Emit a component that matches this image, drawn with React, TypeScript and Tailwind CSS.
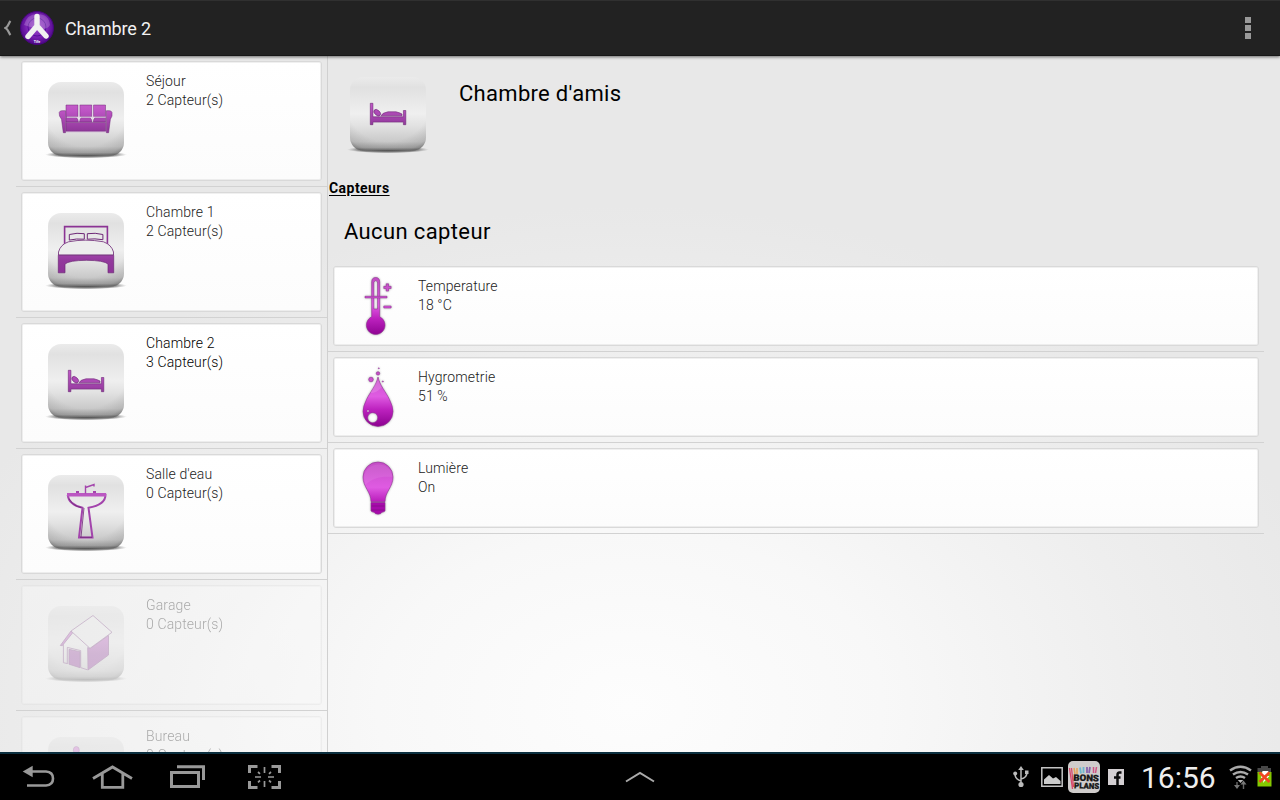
import type { ReactNode } from "react";

type GlyphName = "sofa" | "doubleBed" | "bed" | "sink" | "house" | "desk";

const DARK = "#6d2876";

function Glyph({ name }: { name: GlyphName }) {
  switch (name) {
    case "sofa":
      return (
        <g fill="url(#violet)" stroke={DARK} strokeWidth=".5">
          <path d="M66 105h12v11.7H66zM79.8 105h12v11.7h-12zM93.5 105h12v11.7h-12z" />
          <path d="M66 117.600h10.500l1.800 2.700v1.700H66zM79.600 120.300l1.600-2.700h9l1.600 2.700v1.700H79.600zM93.300 120.300l1.600-2.700h10.700v4.400H93.300z" />
          <path d="M66 122.400h39.700v8.900H66z" />
          <path d="M59.200 112.500q.6-2 3-1.800h3.300v22h-2.200l-1.800-13.500q-2.800-3-2.300-6.700zM112 112.500q-.6-2-3-1.800h-2.600v22h2.200l1.800-13.500q2.400-3 1.600-6.700z" />
          <path d="M66 131.800h40" stroke="#c58ccb" />
          <path d="M79 105v16M92.600 105v16M67 117.200h38.500" stroke="#e4d4e6" strokeWidth=".9" />
        </g>
      );
    case "doubleBed":
      return (
        <g fill="none" stroke={DARK} strokeWidth=".7">
          <path d="M64.600 113V95.600h42.800V113" stroke="#8b3494" strokeWidth="1.600" />
          <path d="M69.300 103.500q8-2 15-.8v5.500q-8-.8-15 .9zM87.300 102.700q8-1.200 15.600.8v5.200q-8-1.400-15.600-.5z" strokeWidth="1" />
          <path d="M58.500 124v-3q2-7.500 10-10.200 17-3.300 35 0 8 3 10 10.200v3z" fill="#ededed" strokeWidth=".8" />
          <path d="M58.300 124.300h55.400v17.500h-5.700v-8.800q-4-3.500-21.500-3.700-17.500.2-21.500 3.700v8.800h-6.700z" fill="url(#violet)" />
        </g>
      );
    case "bed":
      return (
        <g fill="url(#violet)" stroke={DARK} strokeWidth=".6">
          <path d="M68.300 108.300h2.600v13.500h30.500v-6.300h2.400v14.200h-2.400v-2.600H70.900v2.600h-2.600z" />
          <ellipse cx="75.200" cy="117.700" rx="3.900" ry="2.500" transform="rotate(42 75.200 117.700)" />
          <path d="M79 120.800q1-3 7-4h8q4 1 6 2.200v1.800z" />
        </g>
      );
    case "sink":
      return (
        <g fill="none" stroke="#a344ac" strokeWidth="2">
          <path d="M67.500 101.800h38q0 10-17 13l4 29.700h-13.500l3.500-29.700q-14-3.500-14.800-13z" />
          <path d="M67 101.800h39" stroke="#bb58c2" strokeWidth="3.600" />
          <path d="M77.500 100v-2M94.500 100v-2" strokeWidth="3" />
          <path d="M85.500 100.500v-8M85.500 94.500l8.500-3v2" strokeWidth="1.400" />
          <path d="M81 144l3-29M69 105.500q3 7 12.500 9.200M80 144.300h12" stroke={DARK} strokeWidth=".8" />
        </g>
      );
    case "house":
      return (
        <g fill="none" stroke={DARK} strokeWidth=".8">
          <path d="M87.700 123.500l2.300 1 18.500-13v19.500l-20.500 15z" fill="url(#violet)" />
          <path d="M71 107l22-15.500 19 16.800-22 16z" fill="#eeeeee" />
          <path d="M71 107l-10.700 14.500 2 .2L72.500 109z" fill="url(#violet)" />
          <path d="M63.400 120.500v18.200l3.800.8M67.300 140v-16.600l13.400 3.200v17l7 2.300" />
          <path d="M69 125.300l11 2.400v16l-11-3.500z" fill="url(#violet)" />
        </g>
      );
    default:
      return (
        <g fill="url(#violet)" stroke={DARK} strokeWidth=".5">
          <ellipse cx="76.300" cy="95.200" rx="3" ry="3.700" />
          <path d="M73 99h7l3 13h18v3H78z" />
        </g>
      );
  }
}

function Tile({ name }: { name: GlyphName }) {
  return (
    <svg className="h-[84px] w-[84px] shrink-0" viewBox="44 78 84 84">
      <ellipse cx="86" cy="154.600" rx="41" ry="3.600" fill="url(#ground)" />
      <rect x="48" y="82" width="76" height="73.500" rx="13" fill="url(#tile)" />
      <rect x="48" y="82" width="76" height="73.500" rx="13" fill="url(#tileShade)" />
      <Glyph name={name} />
    </svg>
  );
}

function Defs() {
  return (
    <svg className="absolute h-0 w-0" aria-hidden="true">
      <defs>
        <linearGradient id="tile" x1="0" y1="0" x2="0" y2="1">
          <stop offset="0" stopColor="#ebebeb" />
          <stop offset=".14" stopColor="#e1e1e1" />
          <stop offset=".5" stopColor="#efefef" />
          <stop offset=".66" stopColor="#e2e2e2" />
          <stop offset=".88" stopColor="#c9c9c9" />
          <stop offset=".96" stopColor="#a6a6a6" />
          <stop offset="1" stopColor="#666666" />
        </linearGradient>
        <radialGradient id="tileShade" cx=".5" cy=".3" r=".82">
          <stop offset=".7" stopColor="#555" stopOpacity="0" />
          <stop offset=".9" stopColor="#555" stopOpacity=".16" />
          <stop offset="1" stopColor="#333" stopOpacity=".45" />
        </radialGradient>
        <radialGradient id="ground">
          <stop offset="0" stopColor="#222" />
          <stop offset=".75" stopColor="#555" stopOpacity=".6" />
          <stop offset="1" stopColor="#888" stopOpacity="0" />
        </radialGradient>
        <linearGradient id="violet" gradientUnits="userSpaceOnUse" x1="0" y1="92" x2="0" y2="146">
          <stop offset="0" stopColor="#cf68d2" />
          <stop offset=".35" stopColor="#bd54c4" />
          <stop offset=".7" stopColor="#92399c" />
          <stop offset="1" stopColor="#8c3097" />
        </linearGradient>
        <linearGradient id="magenta" gradientUnits="userSpaceOnUse" x1="0" y1="277" x2="0" y2="336">
          <stop offset="0" stopColor="#c04cc2" />
          <stop offset=".48" stopColor="#df5be2" />
          <stop offset=".7" stopColor="#bd22bf" />
          <stop offset="1" stopColor="#8b008f" />
        </linearGradient>
      </defs>
    </svg>
  );
}

function Card({ children, className = "" }: { children: ReactNode; className?: string }) {
  return (
    <div
      className={`flex rounded-[3px] border border-[#d9d9d9] bg-linear-to-b from-white to-[#fcfcfc] shadow-[inset_0_0_0_1px_rgba(0,0,0,0.06)] ${className}`}
    >
      {children}
    </div>
  );
}

const rooms: { name: string; count: number; icon: GlyphName; tone: string; text: string }[] = [
  { name: "Séjour", count: 2, icon: "sofa", tone: "", text: "text-[#222]" },
  { name: "Chambre 1", count: 2, icon: "doubleBed", tone: "", text: "text-[#222]" },
  { name: "Chambre 2", count: 3, icon: "bed", tone: "", text: "text-black" },
  { name: "Salle d'eau", count: 0, icon: "sink", tone: "", text: "text-[#222]" },
  { name: "Garage", count: 0, icon: "house", tone: "opacity-30", text: "text-black" },
  { name: "Bureau", count: 0, icon: "desk", tone: "opacity-30", text: "text-black" },
];

function Thermometer() {
  return (
    <g>
      <path
        d="M371.700 282q0-4.500 4-4.500t4 4.500v34.800a9.300 9.300 0 1 1-8 0zM373.800 282v27h3.800v-27q-1.900-3-3.800 0z"
        fillRule="evenodd"
      />
      <path d="M365 296.300h22v1.600h-22zM383.800 286.300h2.400v-2.500h2.400v2.500h2.500v2.300h-2.500v2.500h-2.400v-2.500h-2.400zM383.800 306h7.300v2h-7.300z" />
    </g>
  );
}

function Drop() {
  return (
    <g>
      <path
        d="M378 286c1.500 8 8 15 11.500 22.500q3.500 7 3.500 12a15 15 0 0 1-30 0q0-5 3.500-12C370 301 376.500 294 378 286zM372.700 321.700a5 5 0 1 0 .01 0z"
        fillRule="evenodd"
      />
      <path d="M370.500 302q6 0 11-5.500L378 288z" fill="#fff" fillOpacity=".15" stroke="none" />
      <circle cx="371" cy="288.500" r="2.300" />
      <circle cx="378" cy="282.400" r="1.700" />
      <circle cx="378.800" cy="277.300" r=".5" />
      <circle cx="382.800" cy="290.500" r=".6" />
      <circle cx="368" cy="320" r="1.100" fill="#fff" />
    </g>
  );
}

function Bulb() {
  return (
    <g>
      <path d="M371 319.700c0-10-8-14.500-8-24.700a15 15 0 0 1 30 0c0 10.200-8 14.700-8 24.700z" />
      <path d="M365 303c8-7 16-9 27.500-8-1-16-26-17-28.500 0z" fill="#fff" fillOpacity=".08" stroke="none" />
      <path d="M371 320.500h14v8.500q-1 1-3 1.200-1 2-4 2t-4-2q-2-.2-3-1.200z" fill="#a70bab" />
      <path d="M371.500 324h13M371.500 328h13" stroke="#7e1182" strokeWidth=".7" />
    </g>
  );
}

const sensors = [
  { name: "Temperature", value: "18 °C", icon: <Thermometer /> },
  { name: "Hygrometrie", value: "51 %", icon: <Drop /> },
  { name: "Lumière", value: "On", icon: <Bulb /> },
];

function Label({ top, bottom, className }: { top: string; bottom: string; className: string }) {
  return (
    <div className={`text-[14px] leading-[19px] font-light tracking-[0.120px] ${className}`}>
      <p>{top}</p>
      <p>{bottom}</p>
    </div>
  );
}

function TopBar() {
  return (
    <header className="z-10 flex h-14 shrink-0 items-center border-t border-b border-t-[#303030] border-b-[#171717] bg-[#222] shadow-[0_1px_3px_rgba(0,0,0,0.55)]">
      <svg className="ml-1 h-4 w-2" viewBox="0 0 8 16" fill="none" stroke="#999" strokeWidth="2.200">
        <path d="M6.500 1C4.500 3 4.500 6.500 1.500 8 4.500 9.500 4.500 13 6.500 15" />
      </svg>
      <svg className="ml-2 h-[34px] w-[34px]" viewBox="0 0 34 34">
        <defs>
          <radialGradient id="logo" cx=".5" cy=".45" r=".55">
            <stop offset="0" stopColor="#9c4fc9" />
            <stop offset=".6" stopColor="#7a22b4" />
            <stop offset="1" stopColor="#4d0687" />
          </radialGradient>
        </defs>
        <circle cx="17" cy="17" r="16.500" fill="url(#logo)" stroke="#47067c" />
        <circle cx="17" cy="16" r="9" fill="none" stroke="#56109a" strokeWidth="1" />
        <path d="M4 14q3-11 13-11 12 0 13 11-2 4-8 4T4 14z" fill="#fff" fillOpacity=".2" />
        <path d="M17 5.500V15L8 25.500M17 15l9 10" fill="none" stroke="#f1f1f1" strokeWidth="5.400" strokeLinecap="round" strokeLinejoin="round" />
        <text x="17" y="31.500" fontSize="3.600" fontWeight="700" textAnchor="middle" fill="#fff">Tife</text>
      </svg>
      <h1 className="mt-0.5 ml-[11px] text-[18px] leading-6 tracking-[-0.160px] text-[#f2f2f2]">Chambre 2</h1>
      <div className="mr-[29px] ml-auto flex flex-col gap-0.5">
        <span className="h-1.5 w-1.5 bg-[#999]" />
        <span className="h-1.5 w-1.5 bg-[#999]" />
        <span className="h-1.5 w-1.5 bg-[#999]" />
      </div>
    </header>
  );
}

function NavBar() {
  return (
    <nav className="grid h-12 shrink-0 grid-cols-[1fr_auto_1fr] items-center border-t-2 border-[#0b2f3f] bg-black">
      <div className="flex items-center text-[#999]">
        <svg className="ml-[22px] h-6 w-[34px]" viewBox="22 765 34 24">
          <path d="M22.700 771.500l10-5.700v11.400z" fill="currentColor" />
          <path d="M31 771.500h15q7 .5 7 7t-7 7H27" fill="none" stroke="currentColor" strokeWidth="2.600" />
        </svg>
        <svg className="ml-9 h-6 w-[42px]" viewBox="92 765 42 24" fill="none" stroke="currentColor" strokeWidth="2.800">
          <path d="M93 778.500l19.500-11.500 19.500 11.500M102.300 773v14.300h20.500V773" />
        </svg>
        <svg className="ml-[35px] h-6 w-[37px]" viewBox="169 765 37 24" fill="none" stroke="currentColor" strokeWidth="3">
          <path d="M171.500 772.500h27v14h-27zM177 766.800h26.500V780" />
        </svg>
        <svg className="ml-[41px] h-[26px] w-[35px]" viewBox="247 764 35 26" fill="none" stroke="currentColor">
          <path d="M249.500 773v-6.500h8M271.500 766.500h8v6.500M279.500 781v6.500h-8M257.500 787.500h-8V781" strokeWidth="3" />
          <path d="M264.500 767v6M264.500 781v6M255 777h6M268 777h6M258 772l2 1.800M271 772l-2 1.800M258 782.300l2-1.800M271 782.300l-2-1.800" strokeWidth="1.700" />
        </svg>
      </div>
      <svg className="h-3 w-8" viewBox="0 0 32 12" fill="none" stroke="#aaa" strokeWidth="2">
        <path d="M2 10.500L16 2l14 8.500" />
      </svg>
      <div className="flex items-center justify-end">
        <svg className="h-[22px] w-4" viewBox="0 0 16 22" fill="none" stroke="#bbb" strokeWidth="1.500">
          <path d="M8 2v17M8 15Q2 13 2 8M8 13q6-1 6-7" />
          <path d="M8 0l2.800 4H5.200z" fill="#bbb" stroke="none" />
          <circle cx="8" cy="18.500" r="2.600" fill="#bbb" stroke="none" />
          <circle cx="2.200" cy="7.500" r="2" fill="#bbb" stroke="none" />
          <path d="M12 4.500h3.500V8H12z" fill="#bbb" stroke="none" />
        </svg>
        <svg className="ml-3 h-5 w-[22px]" viewBox="0 0 22 20">
          <path d="M.8.8h20.400v18.400H.8z" fill="none" stroke="#c4c4c4" strokeWidth="1.500" />
          <path d="M3 17v-4.500L8 8l4 3.500 3-1.500 4.500 4V17z" fill="#ccc" />
        </svg>
        <svg className="ml-[5px] h-8 w-8" viewBox="0 0 32 32">
          <rect width="32" height="32" rx="5" fill="#cfcccb" />
          <path d="M1.500 7l3 21M3.500 7l2 19" stroke="#d8486d" strokeWidth="1.300" />
          <path d="M6 7l1 6M9 7v6" stroke="#e6a25a" strokeWidth="1.600" />
          <path d="M12 6.500l1 6M15.500 6v6" stroke="#6cb8cf" strokeWidth="1.800" />
          <path d="M19 6v6M22 6l-1 6" stroke="#8662ad" strokeWidth="1.800" />
          <path d="M25.500 6v6M28.500 6l-1 6" stroke="#cf5684" strokeWidth="1.500" />
          <g fontSize="9" fontWeight="900" fill="#161616" stroke="#161616" strokeWidth=".3">
            <text x="5.500" y="20" textLength="25.500" lengthAdjust="spacingAndGlyphs" transform="rotate(2 16 16)">BONS</text>
            <text x="6.500" y="27.500" fontSize="8" textLength="25" lengthAdjust="spacingAndGlyphs" transform="rotate(2 16 16)">PLANS</text>
          </g>
        </svg>
        <svg className="ml-2 h-4 w-4" viewBox="0 0 16 16">
          <path d="M0 0h16v16H0z" fill="#d3cfd2" />
          <path d="M13.500 3.500h-2Q9.500 3.500 9.500 6v10M6 8.500h6.500" fill="none" stroke="#090909" strokeWidth="2.500" />
        </svg>
        <span className="mt-px ml-[17px] w-[76px] text-[30px] leading-8 text-[#eee]">16:56</span>
        <svg className="ml-3 h-6 w-[23px]" viewBox="1229 763 23 24" fill="none" stroke="#aaa" strokeWidth="2.500">
          <path d="M1230 768.500q10.500-7.500 21 0M1233 772.500q7.500-5 15 0M1236 776q4.500-3 9 0" />
          <path d="M1237.800 778h5.400l-2.700 3z" fill="#bbb" stroke="none" />
          <path d="M1237 780v4M1243.500 782v5" stroke="#666" strokeWidth="1.400" />
          <path d="M1234 783h6l-3 4zM1240.500 782.500h6l-3-4z" fill="#777" stroke="none" />
        </svg>
        <svg className="mr-2 mb-0.5 ml-[5px] h-[22px] w-[15px]" viewBox="0 0 15 22">
          <path d="M4 1h7v2h3v5H.500V3H4z" fill="#484848" />
          <path d="M.5 7h14v14.500H.5z" fill="#83c900" />
          <path d="M5.500 6h6l-2 5h3l-6.500 7 1-5H4z" fill="#fff" />
          <path d="M2.500 7.500l10 9.500M12.500 7.500l-10 9.500" stroke="#f04723" strokeWidth="2.800" />
        </svg>
      </div>
    </nav>
  );
}

export default function App() {
  return (
    <div className="flex h-[800px] w-[1280px] flex-col overflow-hidden bg-black font-['Roboto','Liberation_Sans',sans-serif]">
      <Defs />
      <TopBar />
      <main className="flex min-h-0 flex-1 bg-[radial-gradient(ellipse_720px_500px_at_630px_650px,#fdfdfd_0%,#f8f8f8_35%,#eeeeee_72%,#e8e8e8_100%)] px-4">
        <aside className="h-full w-[312px] shrink-0 overflow-hidden border-r border-[#d0d0d0]">
          {rooms.map((room) => (
            <div key={room.name} className="h-[131px] border-b border-[#d2d2d2] p-[5px]">
              <Card className={`h-[120px] w-[301px] pt-4 pl-[22px] ${room.tone}`}>
                <Tile name={room.icon} />
                <Label top={room.name} bottom={`${room.count} Capteur(s)`} className={`-mt-1.5 ml-[18px] ${room.text}`} />
              </Card>
            </div>
          ))}
        </aside>
        <section className="min-w-0 flex-1">
          <div className="flex h-[122px] pt-[17px] pl-[18px]">
            <Tile name="bed" />
            <h2 className="mt-[7px] ml-[29px] text-[22px] leading-7 tracking-[0.300px] text-black">Chambre d'amis</h2>
          </div>
          <h3 className="ml-px h-5 text-[14px] leading-5 font-bold tracking-[0.450px] underline underline-offset-2">Capteurs</h3>
          <p className="h-[63px] pt-5 pl-4 text-[22px] leading-7 tracking-[0.370px] text-black">Aucun capteur</p>
          <div>
            {sensors.map((sensor) => (
              <div key={sensor.name} className="h-[91px] border-b border-[#d2d2d2] p-[5px]">
                <Card className="h-20 w-[926px] pt-[3px] pl-[21px]">
                  <svg
                    className="h-[70px] w-[45px]"
                    viewBox="355 270 45 70"
                    fill="url(#magenta)"
                    stroke="#8f3292"
                    strokeWidth=".6"
                    filter="drop-shadow(0 0 1px #aaa)"
                  >
                    {sensor.icon}
                  </svg>
                  <Label top={sensor.name} bottom={sensor.value} className="mt-[7px] ml-[18px] text-[#222]" />
                </Card>
              </div>
            ))}
          </div>
        </section>
      </main>
      <NavBar />
    </div>
  );
}
